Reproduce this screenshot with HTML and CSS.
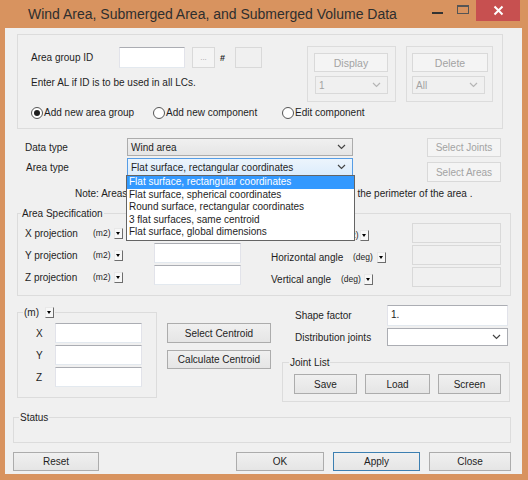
FILE: index.html
```html
<!DOCTYPE html>
<html lang="en">
<head>
    <meta charset="UTF-8">
    <title>Wind Area, Submerged Area, and Submerged Volume Data</title>
    <link rel="stylesheet" href="styles.css">
</head>
<body>
<div class="window">
    <!-- title bar -->
    <div class="titlebar">
        <div class="title">Wind Area, Submerged Area, and Submerged Volume Data</div>
        <div class="tb-min"></div>
        <div class="tb-max"></div>
        <div class="tb-close">
            <svg width="11" height="11" viewBox="0 0 11 11"><path d="M1.5 1.5L9.5 9.5M9.5 1.5L1.5 9.5" stroke="#fff" stroke-width="2"/></svg>
        </div>
    </div>

    <div class="client">
        <!-- area group -->
        <div class="group group-top">
            <div class="top-row">
                <div class="id-block">
                    <div class="id-row">
                        <span class="id-label">Area group ID</span>
                        <div class="textbox id-input"></div>
                        <div class="btn disabled dots">...</div>
                        <span class="hash">#</span>
                        <div class="textbox disabled num-box"></div>
                    </div>
                    <div class="hint">Enter AL if ID is to be used in all LCs.</div>
                </div>
                <div class="group small-group">
                    <div class="btn disabled">Display</div>
                    <div class="combo disabled display-combo">
                        <span>1</span>
                        <svg class="chev" width="9" height="6" viewBox="0 0 9 6"><path d="M1 1L4.5 4.5L8 1" fill="none" stroke="#b5b5b5" stroke-width="1.2"/></svg>
                    </div>
                </div>
                <div class="group small-group delete-group">
                    <div class="btn disabled">Delete</div>
                    <div class="combo disabled">
                        <span>All</span>
                        <svg class="chev" width="9" height="6" viewBox="0 0 9 6"><path d="M1 1L4.5 4.5L8 1" fill="none" stroke="#b5b5b5" stroke-width="1.2"/></svg>
                    </div>
                </div>
            </div>
            <div class="radio-row">
                <label class="radio r-first"><span class="dot checked"></span>Add new area group</label>
                <label class="radio r-second"><span class="dot"></span>Add new component</label>
                <label class="radio"><span class="dot"></span>Edit component</label>
            </div>
        </div>

        <!-- data type / area type -->
        <div class="type-area">
            <div class="type-fields">
                <div class="field-row">
                    <span class="field-label">Data type</span>
                    <div class="combo wide">
                        <span>Wind area</span>
                        <svg class="chev" width="9" height="6" viewBox="0 0 9 6"><path d="M1 1L4.5 4.5L8 1" fill="none" stroke="#444" stroke-width="1.2"/></svg>
                    </div>
                </div>
                <div class="field-row second">
                    <span class="field-label indent">Area type</span>
                    <div class="combo wide focused">
                        <span>Flat surface, rectangular coordinates</span>
                        <svg class="chev" width="9" height="6" viewBox="0 0 9 6"><path d="M1 1L4.5 4.5L8 1" fill="none" stroke="#444" stroke-width="1.2"/></svg>
                    </div>
                </div>
            </div>
            <div class="type-buttons">
                <div class="btn disabled joints-btn">Select Joints</div>
                <div class="btn disabled areas-btn">Select Areas</div>
            </div>
        </div>
        <!-- the middle of the note is hidden behind the open list -->
        <div class="note">
            <span class="note-head">Note: Areas</span>
            <span class="note-tail">to the perimeter of the area .</span>
        </div>

        <!-- open dropdown list of area type -->
        <div class="dropdown-list">
            <div class="item selected">Flat surface, rectangular coordinates</div>
            <div class="item">Flat surface, spherical coordinates</div>
            <div class="item">Round surface, rectangular coordinates</div>
            <div class="item">3 flat surfaces, same centroid</div>
            <div class="item">Flat surface, global dimensions</div>
        </div>

        <!-- area specification -->
        <div class="group spec-group">
            <span class="legend">Area Specification</span>
            <div class="spec-left">
                <div class="spec-row">
                    <span class="spec-label">X projection</span>
                    <span class="unit">(m2)</span>
                    <span class="mini-drop"></span>
                    <div class="textbox spec-input"></div>
                </div>
                <div class="spec-row">
                    <span class="spec-label">Y projection</span>
                    <span class="unit">(m2)</span>
                    <span class="mini-drop"></span>
                    <div class="textbox spec-input"></div>
                </div>
                <div class="spec-row">
                    <span class="spec-label">Z projection</span>
                    <span class="unit">(m2)</span>
                    <span class="mini-drop"></span>
                    <div class="textbox spec-input"></div>
                </div>
            </div>
            <div class="spec-right">
                <div class="spec-row">
                    <span class="spec-label lbl-total">Total area</span>
                    <span class="unit u-m2">(m2)</span>
                    <span class="mini-drop"></span>
                    <div class="textbox disabled spec-box"></div>
                </div>
                <div class="spec-row">
                    <span class="spec-label lbl-horiz">Horizontal angle</span>
                    <span class="unit u-deg">(deg)</span>
                    <span class="mini-drop"></span>
                    <div class="textbox disabled spec-box"></div>
                </div>
                <div class="spec-row">
                    <span class="spec-label lbl-vert">Vertical angle</span>
                    <span class="unit u-deg2">(deg)</span>
                    <span class="mini-drop"></span>
                    <div class="textbox disabled spec-box"></div>
                </div>
            </div>
        </div>

        <!-- centroid / shape factor -->
        <div class="lower">
            <div class="group m-group">
                <span class="legend">(m) <span class="mini-drop"></span></span>
                <div class="coord-row"><span class="coord-label">X</span><div class="textbox coord-input"></div></div>
                <div class="coord-row"><span class="coord-label">Y</span><div class="textbox coord-input"></div></div>
                <div class="coord-row"><span class="coord-label">Z</span><div class="textbox coord-input"></div></div>
            </div>
            <div class="centroid-btns">
                <div class="btn centroid-btn">Select Centroid</div>
                <div class="btn centroid-btn calc">Calculate Centroid</div>
            </div>
            <div class="shape-col">
                <div class="shape-row">
                    <span class="shape-label">Shape factor</span>
                    <div class="textbox shape-input">1.</div>
                </div>
                <div class="shape-row dist">
                    <span class="shape-label">Distribution joints</span>
                    <div class="combo white shape-combo">
                        <span></span>
                        <svg class="chev" width="9" height="6" viewBox="0 0 9 6"><path d="M1 1L4.5 4.5L8 1" fill="none" stroke="#444" stroke-width="1.2"/></svg>
                    </div>
                </div>
                <div class="group joint-group">
                    <span class="legend">Joint List</span>
                    <div class="btn save-btn">Save</div>
                    <div class="btn load-btn">Load</div>
                    <div class="btn screen-btn">Screen</div>
                </div>
            </div>
        </div>

        <!-- status -->
        <div class="group status-group">
            <span class="legend">Status</span>
        </div>

        <!-- dialog buttons -->
        <div class="dialog-buttons">
            <div class="btn reset-btn">Reset</div>
            <div class="btn ok-btn">OK</div>
            <div class="btn apply-btn">Apply</div>
            <div class="btn close-btn">Close</div>
        </div>
    </div>
</div>
</body>
</html>
```

FILE: styles.css
```css
* {
    box-sizing: border-box;
}
body {
    margin: 0;
    font-family: "Liberation Sans", Arial, sans-serif;
    font-size: 10px;
    color: #1e1e1e;
    background: #d8935f;
}
.window {
    width: 528px;
    height: 480px;
    background: #d8935f;
}

/* title bar */
.titlebar {
    height: 28px;
    display: flex;
    align-items: flex-start;
}
.title {
    flex: 1;
    margin: 6px 0 0 28px;
    font-size: 14px;
    line-height: 16px;
    color: #2e2e2e;
}
.tb-min {
    width: 11px;
    height: 2px;
    margin: 12px 14px 0 0;
    background: #333;
}
.tb-max {
    width: 12px;
    height: 9px;
    margin: 5px 7px 0 0;
    border: 1px solid #555;
    border-top-width: 2px;
}
.tb-close {
    width: 44px;
    height: 21px;
    margin-right: 8px;
    background: #c75050;
    display: flex;
    align-items: center;
    justify-content: center;
}

/* client area */
.client {
    position: relative;
    margin-left: 5px;
    width: 517px;
    height: 446px;
    padding-top: 6px;
    background: #f0f0f0;
}
.group {
    position: relative;
    border: 1px solid #dcdcdc;
    flex-shrink: 0;
}
.legend {
    position: absolute;
    top: -7px;
    left: 3px;
    padding: 0 1px;
    line-height: 13px;
    background: #f0f0f0;
    display: flex;
    align-items: center;
}

/* controls */
.btn {
    display: flex;
    align-items: center;
    justify-content: center;
    border: 1px solid #acacac;
    background: linear-gradient(#f0f0f0, #e5e5e5);
    flex-shrink: 0;
}
.btn.disabled {
    border-color: #d9d9d9;
    background: #f4f4f4;
    color: #a3a3a3;
}
.textbox {
    background: #fff;
    border: 1px solid #abadb3;
    border-color: #abadb3 #e2e3ea #e3e9ef #e2e3ea;
    flex-shrink: 0;
}
.textbox.disabled {
    background: #f0f0f0;
    border: 1px solid #d9d9d9;
}
.combo {
    display: flex;
    align-items: center;
    justify-content: space-between;
    padding: 0 6px 0 3px;
    border: 1px solid #acacac;
    background: linear-gradient(#f0f0f0, #e5e5e5);
    flex-shrink: 0;
}
.combo.disabled {
    border-color: #d9d9d9;
    background: #f0f0f0;
    color: #a3a3a3;
}
.combo.focused {
    border-color: #569de5;
    background: linear-gradient(#ecf4fc, #dcecfc);
}
.combo.white {
    background: #fff;
    border-color: #abadb3;
}
.mini-drop {
    position: relative;
    display: inline-block;
    width: 9px;
    height: 11px;
    border: 1px solid;
    border-color: #e8e8e8 #6d6d6d #6d6d6d #e8e8e8;
    background: #f7f7f7;
    flex-shrink: 0;
}
.mini-drop::after {
    content: "";
    position: absolute;
    left: 1px;
    top: 3px;
    border-left: 2.5px solid transparent;
    border-right: 2.5px solid transparent;
    border-top: 3px solid #000;
}

/* area group */
.group-top {
    margin-left: 12px;
    width: 486px;
    height: 95px;
}
.top-row {
    display: flex;
    margin-top: 11px;
    height: 56px;
}
.id-block {
    width: 289px;
    padding-left: 13px;
}
.id-row {
    display: flex;
    align-items: center;
    margin-top: 1px;
    height: 21px;
}
.id-label {
    width: 88px;
}
.id-input {
    width: 66px;
    height: 21px;
}
.dots {
    width: 23px;
    height: 21px;
    margin-left: 7px;
    font-size: 8px;
}
.hash {
    width: 20px;
    padding-left: 5px;
    font-size: 9px;
    font-weight: bold;
}
.num-box {
    width: 27px;
    height: 21px;
}
.hint {
    margin-top: 8px;
    line-height: 13px;
}
.small-group {
    width: 89px;
    height: 56px;
    padding: 6px 0 0 6px;
}
.small-group .btn {
    width: 74px;
    height: 19px;
    font-size: 10.5px;
}
.small-group .combo {
    width: 73px;
    height: 18px;
    margin-top: 4px;
}
.display-combo {
    margin-left: 1px;
}
.delete-group {
    margin-left: 10px;
    width: 87px;
    padding-left: 5px;
}
.delete-group .btn {
    width: 76px;
}
.radio-row {
    display: flex;
    align-items: center;
    height: 13px;
    margin-top: 4px;
    padding-left: 13px;
}
.radio {
    display: flex;
    align-items: center;
    gap: 1px;
}
.r-first {
    width: 122px;
}
.r-second {
    width: 129px;
}
.dot {
    position: relative;
    width: 12px;
    height: 12px;
    border: 1px solid #555;
    border-radius: 50%;
    background: #fff;
}
.dot.checked::after {
    content: "";
    position: absolute;
    left: 2px;
    top: 2px;
    width: 6px;
    height: 6px;
    border-radius: 50%;
    background: #1e1e1e;
}

/* data type */
.type-area {
    display: flex;
    margin: 9px 0 0 20px;
}
.type-fields {
    width: 328px;
}
.field-row {
    display: flex;
    align-items: center;
    height: 18px;
}
.field-row.second {
    margin-top: 2px;
}
.field-label {
    width: 102px;
}
.field-label.indent {
    padding-left: 1px;
}
.combo.wide {
    width: 226px;
    height: 18px;
}
.type-buttons {
    margin-left: 74px;
}
.joints-btn {
    width: 74px;
    height: 19px;
}
.areas-btn {
    width: 74px;
    height: 20px;
    margin-top: 5px;
}
.note {
    display: flex;
    margin: 5px 0 0 70px;
    line-height: 13px;
    white-space: nowrap;
}
.note-tail {
    margin-left: 219px;
}
.dropdown-list {
    position: absolute;
    left: 121px;
    top: 147px;
    width: 229px;
    height: 66px;
    border: 1px solid #646464;
    background: #fff;
    z-index: 2;
}
.dropdown-list .item {
    height: 12.6px;
    line-height: 12.6px;
    padding-left: 2px;
    white-space: nowrap;
}
.dropdown-list .item.selected {
    background: #3399ff;
    color: #fff;
}

/* area specification */
.spec-group {
    display: flex;
    margin: 13px 0 0 12px;
    width: 494px;
    height: 83px;
}
.spec-left {
    padding: 7px 0 0 7px;
}
.spec-right {
    width: 230px;
    margin-left: 30px;
    padding-top: 9px;
}
.spec-row {
    display: flex;
    align-items: center;
    height: 20px;
    margin-bottom: 2px;
}
.spec-row > span {
    margin-top: 4px;
}
.spec-label {
    width: 68px;
    flex-shrink: 0;
}
.unit {
    width: 21px;
    font-size: 8.5px;
    flex-shrink: 0;
}
.spec-input {
    width: 87px;
    height: 20px;
    margin-left: 31px;
}
.lbl-total {
    width: 70px;
}
.lbl-horiz {
    width: 82px;
}
.lbl-vert {
    width: 70px;
}
.u-m2 {
    width: 19px;
}
.u-deg {
    width: 24px;
}
.u-deg2 {
    width: 23px;
}
.spec-box {
    width: 89px;
    height: 20px;
    margin-left: auto;
}

/* centroid and shape factor */
.lower {
    display: flex;
    margin: 9px 0 0 12px;
    height: 97px;
}
.m-group {
    width: 140px;
    height: 86px;
    margin-top: 7px;
    padding-top: 10px;
}
.m-group .legend {
    left: 5px;
    gap: 6px;
}
.coord-row {
    display: flex;
    align-items: center;
    height: 20px;
    margin-bottom: 2px;
}
.coord-label {
    width: 37px;
    padding-left: 18px;
}
.coord-input {
    width: 87px;
    height: 20px;
}
.centroid-btns {
    margin: 18px 0 0 10px;
}
.centroid-btn {
    width: 104px;
    height: 20px;
}
.centroid-btn.calc {
    height: 19px;
    margin-top: 7px;
}
.shape-col {
    width: 229px;
    margin-left: 11px;
}
.shape-row {
    display: flex;
    align-items: center;
    padding-left: 13px;
}
.shape-label {
    width: 92px;
}
.shape-input {
    width: 121px;
    height: 21px;
    padding: 3px 0 0 3px;
}
.shape-row.dist {
    margin-top: 2px;
}
.shape-combo {
    width: 121px;
    height: 18px;
}
.joint-group {
    display: flex;
    width: 228px;
    height: 40px;
    margin-top: 16px;
    padding: 11px 0 0 11px;
}
.joint-group .legend {
    left: 6px;
}
.save-btn {
    width: 63px;
    height: 20px;
}
.load-btn {
    width: 65px;
    height: 20px;
    margin-left: 8px;
}
.screen-btn {
    width: 63px;
    height: 20px;
    margin-left: 8px;
}

/* status and dialog buttons */
.status-group {
    margin: 15px 0 0 8px;
    width: 498px;
    height: 26px;
}
.status-group .legend {
    left: 5px;
}
.dialog-buttons {
    display: flex;
    margin: 9px 0 0 8px;
}
.dialog-buttons .btn {
    height: 19px;
}
.reset-btn {
    width: 86px;
}
.ok-btn {
    width: 88px;
    margin-left: 137px;
}
.apply-btn {
    width: 87px;
    margin-left: 9px;
    border-color: #3c7fb1;
}
.close-btn {
    width: 82px;
    margin-left: 9px;
}
```
